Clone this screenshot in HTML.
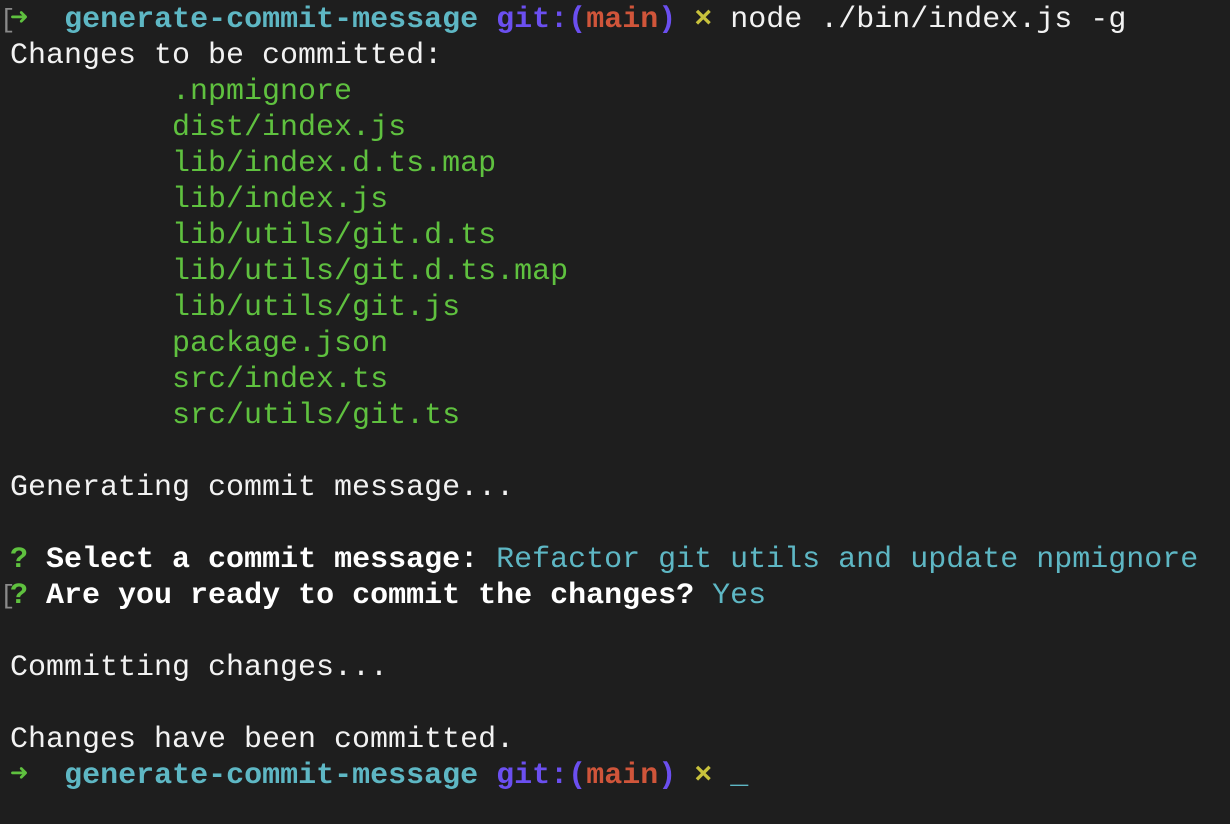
<!DOCTYPE html>
<html><head><meta charset="utf-8"><style>
html,body{margin:0;padding:0;background:#1e1e1e;width:1230px;height:824px;overflow:hidden}
pre{margin:0;position:absolute;left:10px;top:2px;font-family:"Liberation Mono","DejaVu Sans Mono",monospace;font-size:30px;line-height:36px;color:#f2f2f2;white-space:pre}
.c{color:#5eb7c4;font-weight:bold}
.p{color:#6b4ff0;font-weight:bold}
.r{color:#d0553a;font-weight:bold}
.y{color:#c8c23c;font-weight:bold}
.g{color:#5fc13f}
.ga{color:#5fc13f;font-weight:bold}
.b{font-weight:bold;color:#fff}
.t{color:#5eb7c4}
.br{position:absolute;left:0;font-family:"Liberation Mono",monospace;font-size:26px;color:#8a8a8a;line-height:36px}
</style></head><body>
<div class="br" style="top:2px">[</div>
<div class="br" style="top:578px">[</div>
<pre><span class="ga">➜</span>  <span class="c">generate-commit-message</span> <span class="p">git:(</span><span class="r">main</span><span class="p">)</span> <span class="y">×</span> node ./bin/index.js -g
Changes to be committed:
         <span class="g">.npmignore</span>
         <span class="g">dist/index.js</span>
         <span class="g">lib/index.d.ts.map</span>
         <span class="g">lib/index.js</span>
         <span class="g">lib/utils/git.d.ts</span>
         <span class="g">lib/utils/git.d.ts.map</span>
         <span class="g">lib/utils/git.js</span>
         <span class="g">package.json</span>
         <span class="g">src/index.ts</span>
         <span class="g">src/utils/git.ts</span>

Generating commit message...

<span class="ga">?</span> <span class="b">Select a commit message:</span> <span class="t">Refactor git utils and update npmignore</span>
<span class="ga">?</span> <span class="b">Are you ready to commit the changes?</span> <span class="t">Yes</span>

Committing changes...

Changes have been committed.
<span class="ga">➜</span>  <span class="c">generate-commit-message</span> <span class="p">git:(</span><span class="r">main</span><span class="p">)</span> <span class="y">×</span> <span class="t">_</span></pre>
</body></html>
